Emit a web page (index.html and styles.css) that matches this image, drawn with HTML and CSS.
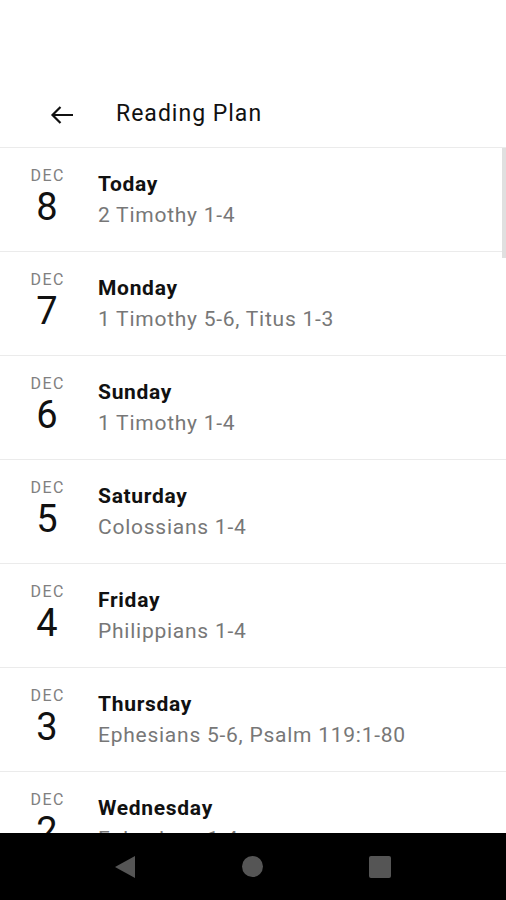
FILE: index.html
```html
<!DOCTYPE html>
<html lang="en">
<head>
    <meta charset="UTF-8">
    <meta name="viewport" content="width=device-width, initial-scale=1.0">
    <title>Reading Plan</title>
    <link rel="stylesheet" href="styles.css">
</head>
<body>
    <div class="status"></div>

    <div class="header">
        <svg class="back" width="24" height="20" viewBox="0 0 24 20">
            <path d="M23 10H2.5M10.5 2L2.5 10l8 8" fill="none" stroke="#111" stroke-width="2.2"/>
        </svg>
        <div class="title">Reading Plan</div>
    </div>

    <div class="list">
        <div class="scrollbar"></div>

        <div class="row">
            <div class="date"><div class="month">DEC</div><div class="day">8</div></div>
            <div class="info"><div class="name">Today</div><div class="passage">2 Timothy 1-4</div></div>
        </div>
        <div class="row">
            <div class="date"><div class="month">DEC</div><div class="day">7</div></div>
            <div class="info"><div class="name">Monday</div><div class="passage">1 Timothy 5-6, Titus 1-3</div></div>
        </div>
        <div class="row">
            <div class="date"><div class="month">DEC</div><div class="day">6</div></div>
            <div class="info"><div class="name">Sunday</div><div class="passage">1 Timothy 1-4</div></div>
        </div>
        <div class="row">
            <div class="date"><div class="month">DEC</div><div class="day">5</div></div>
            <div class="info"><div class="name">Saturday</div><div class="passage">Colossians 1-4</div></div>
        </div>
        <div class="row">
            <div class="date"><div class="month">DEC</div><div class="day">4</div></div>
            <div class="info"><div class="name">Friday</div><div class="passage">Philippians 1-4</div></div>
        </div>
        <div class="row">
            <div class="date"><div class="month">DEC</div><div class="day">3</div></div>
            <div class="info"><div class="name">Thursday</div><div class="passage">Ephesians 5-6, Psalm 119:1-80</div></div>
        </div>
        <div class="row">
            <div class="date"><div class="month">DEC</div><div class="day">2</div></div>
            <div class="info"><div class="name">Wednesday</div><div class="passage">Ephesians 1-4</div></div>
        </div>
    </div>

    <div class="navbar">
        <svg width="22" height="24" viewBox="0 0 22 24"><path d="M21 1V23L1 12z" fill="#555"/></svg>
        <span class="nav-circle"></span>
        <span class="nav-square"></span>
    </div>
</body>
</html>
```

FILE: styles.css
```css
body {
    margin: 0;
    height: 900px;
    display: flex;
    flex-direction: column;
    font-family: Roboto, 'Liberation Sans', sans-serif;
    background-color: #fff;
    color: #111;
}

.status {
    height: 80px;
    flex-shrink: 0;
}

.header {
    height: 67px;
    flex-shrink: 0;
    display: flex;
    align-items: center;
    border-bottom: 1px solid #ebebeb;
}

.back {
    margin-left: 50px;
    margin-top: 2px;
}

.title {
    margin-left: 42px;
    font-size: 23px;
    letter-spacing: 1px;
}

.list {
    flex: 1;
    overflow: hidden;
    position: relative;
}

.scrollbar {
    position: absolute;
    top: 0;
    right: 0;
    width: 4px;
    height: 110px;
    background-color: #e0e0e0;
}

.row {
    height: 103px;
    display: flex;
    align-items: center;
    border-bottom: 1px solid #ebebeb;
}

.date {
    width: 62px;
    margin-left: 16px;
    margin-bottom: 5px;
    text-align: center;
}

.month {
    font-size: 16px;
    line-height: 18px;
    color: #808080;
    letter-spacing: 1.5px;
    padding-left: 1.5px;
}

.day {
    margin-top: 2px;
    font-size: 38px;
    line-height: 40px;
}

.info {
    margin-left: 20px;
}

.name {
    font-size: 21px;
    line-height: 31px;
    font-weight: 700;
    letter-spacing: 0.7px;
}

.passage {
    font-size: 21px;
    line-height: 31px;
    color: #777;
    letter-spacing: 0.75px;
}

.navbar {
    height: 67px;
    flex-shrink: 0;
    background-color: #000;
    display: flex;
    align-items: center;
    justify-content: center;
    gap: 106px;
    padding-right: 2px;
}

.nav-circle {
    width: 21px;
    height: 21px;
    border-radius: 50%;
    background-color: #555;
}

.nav-square {
    width: 22px;
    height: 22px;
    border-radius: 2px;
    background-color: #555;
}
```
